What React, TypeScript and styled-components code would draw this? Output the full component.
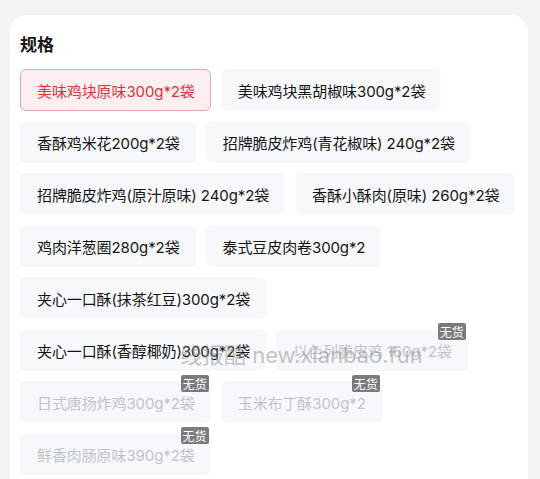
import styled, { createGlobalStyle } from "styled-components";

type Spec = {
  name: string;
  selected?: boolean;
  soldOut?: boolean;
};

const specs: Spec[] = [
  { name: "美味鸡块原味300g*2袋", selected: true },
  { name: "美味鸡块黑胡椒味300g*2袋" },
  { name: "香酥鸡米花200g*2袋" },
  { name: "招牌脆皮炸鸡(青花椒味) 240g*2袋" },
  { name: "招牌脆皮炸鸡(原汁原味) 240g*2袋" },
  { name: "香酥小酥肉(原味) 260g*2袋" },
  { name: "鸡肉洋葱圈280g*2袋" },
  { name: "泰式豆皮肉卷300g*2" },
  { name: "夹心一口酥(抹茶红豆)300g*2袋" },
  { name: "夹心一口酥(香醇椰奶)300g*2袋" },
  { name: "以色列脆皮鸡 160g*2袋", soldOut: true },
  { name: "日式唐扬炸鸡300g*2袋", soldOut: true },
  { name: "玉米布丁酥300g*2", soldOut: true },
  { name: "鲜香肉肠原味390g*2袋", soldOut: true },
];

export default function App() {
  return (
    <>
      <GlobalStyle />
      <Page>
        <Card>
          <Title>规格</Title>
          <Options>
            {specs.map((s) => (
              <Chip key={s.name} $selected={s.selected} $disabled={s.soldOut}>
                {s.name}
                {s.soldOut && <Badge>无货</Badge>}
              </Chip>
            ))}
          </Options>
          <Watermark>线报酷 new.xianbao.fun</Watermark>
        </Card>
      </Page>
    </>
  );
}

const GlobalStyle = createGlobalStyle`
  html, body {
    margin: 0;
    padding: 0;
    background: #f4f4f5;
  }
  body {
    font-family: "Inter", "Noto Sans CJK SC", sans-serif;
  }
`;

const Page = styled.div`
  height: 479px;
  overflow: hidden;
  padding: 15px 12px 0 10px;
  box-sizing: border-box;
`;

const Card = styled.div`
  position: relative;
  background: #ffffff;
  border-radius: 16px 16px 0 0;
  padding: 20px 8px 20px 10px;
  min-height: 520px;
  box-sizing: border-box;
`;

const Title = styled.div`
  font-size: 17px;
  line-height: 20px;
  font-weight: 700;
  color: #161616;
  margin-bottom: 14px;
`;

const Options = styled.div`
  display: flex;
  flex-wrap: wrap;
  gap: 10px;
`;

const Chip = styled.div<{ $selected?: boolean; $disabled?: boolean }>`
  position: relative;
  height: 42px;
  display: flex;
  align-items: center;
  padding: 0 15px 0 16px;
  box-sizing: border-box;
  border-radius: 6px;
  font-size: 15px;
  letter-spacing: -0.1px;
  white-space: nowrap;
  background: ${(p) => (p.$selected ? "#fdeef0" : "#f7f8fa")};
  border: 1px solid ${(p) => (p.$selected ? "#e6a3aa" : "transparent")};
  color: ${(p) =>
    p.$selected ? "#d8333f" : p.$disabled ? "#c3c4c8" : "#141414"};
`;

const Badge = styled.span`
  position: absolute;
  top: -7px;
  right: 1px;
  height: 17px;
  padding: 0 2px;
  display: flex;
  align-items: center;
  font-size: 12px;
  letter-spacing: 0;
  color: #ffffff;
  background: #7b7b7d;
  border-radius: 2px;
`;

const Watermark = styled.div`
  position: absolute;
  left: 170px;
  top: 322px;
  font-size: 22px;
  color: rgba(140, 140, 140, 0.5);
  white-space: nowrap;
  pointer-events: none;
`;
